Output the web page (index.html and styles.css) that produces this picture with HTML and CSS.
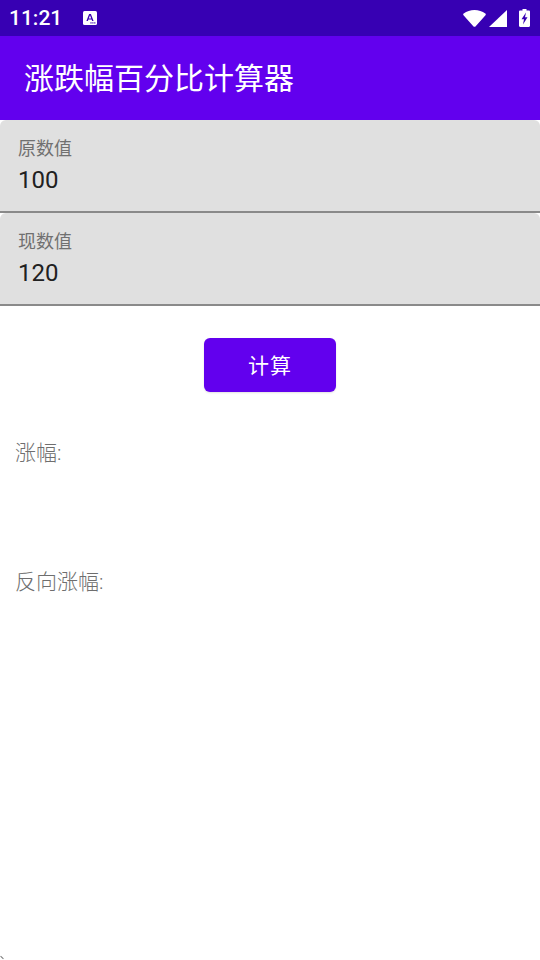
FILE: index.html
```html
<!DOCTYPE html>
<html lang="zh-CN">
<head>
    <meta charset="UTF-8">
    <meta name="viewport" content="width=device-width, initial-scale=1.0">
    <title>涨跌幅百分比计算器</title>
    <link rel="stylesheet" href="styles.css">
</head>
<body>
    <!-- Status bar -->
    <div class="status-bar">
        <span class="time">11:21</span>
        <svg class="icon-a" width="14" height="14" viewBox="0 0 14 14">
            <rect width="14" height="14" rx="1.500" fill="#fff"/>
            <path d="M3.400 10 6.100 3h1.800l2.700 7H9.100l-.5-1.400H5.400L4.900 10zM5.800 7.400h2.400L7 4.200z" fill="#3700B3"/>
            <rect x="7.400" y="11.300" width="1.200" height="1.200" fill="#3700B3"/>
            <rect x="9.300" y="11.300" width="1.200" height="1.200" fill="#3700B3"/>
            <rect x="11.200" y="11.300" width="1.200" height="1.200" fill="#3700B3"/>
        </svg>
        <div class="status-icons">
            <svg class="icon-wifi" width="23" height="17" viewBox="0 0 23 17"><path d="M10.300 16.200.5 5.300c-.5-.6-.4-1.400.2-1.800C3.700 1.300 7.400 0 11.500 0s7.800 1.300 10.800 3.500c.6.400.7 1.200.2 1.800l-9.800 10.900c-.7.700-1.700.7-2.400 0z" fill="#fff"/></svg>
            <svg class="icon-signal" width="18" height="17" viewBox="0 0 18 17"><path d="M0 17 18 0v17z" fill="#fff"/></svg>
            <svg class="icon-battery" width="11" height="18" viewBox="0 0 11 18">
                <path d="M3.500 0h4v1.500h2.300c.7 0 1.200.5 1.200 1.200v14.100c0 .7-.5 1.200-1.200 1.200H1.200C.5 18 0 17.500 0 16.800V2.700c0-.7.500-1.200 1.200-1.200h2.300z" fill="#fff"/>
                <path d="M7 3.500 2.500 10.300h2.500L4 15.500l4.500-7.300H6z" fill="#3700B3"/>
            </svg>
        </div>
    </div>

    <!-- App bar -->
    <header class="app-bar">涨跌幅百分比计算器</header>

    <!-- Inputs -->
    <div class="field">
        <label class="field-label">原数值</label>
        <div class="field-value">100</div>
    </div>
    <div class="field">
        <label class="field-label">现数值</label>
        <div class="field-value">120</div>
    </div>

    <div class="actions">
        <button class="calc-btn">计算</button>
    </div>

    <!-- Results -->
    <div class="results">
        <p class="result">涨幅:</p>
        <p class="result">反向涨幅:</p>
    </div>

    <div class="corner-mark"></div>
</body>
</html>
```

FILE: styles.css
```css
body {
    position: relative;
    margin: 0;
    height: 960px;
    overflow: hidden;
    background-color: #fff;
    font-family: Roboto, "Noto Sans CJK SC", sans-serif;
}
.status-bar {
    display: flex;
    align-items: center;
    height: 36px;
    padding: 0 10px 0 9px;
    background-color: #3700B3;
    color: #fff;
}
.time {
    font-size: 21px;
    font-weight: 500;
}
.icon-a {
    margin-left: 21px;
}
.status-icons {
    display: flex;
    align-items: center;
    margin-left: auto;
}
.icon-signal {
    margin-left: 3px;
}
.icon-battery {
    margin-left: 12px;
}
.app-bar {
    box-sizing: border-box;
    display: flex;
    align-items: center;
    height: 84px;
    padding: 0 0 4px 24px;
    background-color: #6200EE;
    color: #fff;
    font-size: 30px;
}
.field {
    box-sizing: border-box;
    height: 93px;
    padding: 17px 18px 0;
    background-color: #E0E0E0;
    border-bottom: 2px solid #8a8a8a;
    border-radius: 6px 6px 0 0;
}
.field-label {
    display: block;
    font-size: 18px;
    line-height: 24px;
    color: #707070;
}
.field-value {
    margin-top: 3px;
    font-size: 24px;
    line-height: 32px;
    color: #212121;
}
.actions {
    display: flex;
    justify-content: center;
    padding-top: 32px;
}
.calc-btn {
    width: 132px;
    height: 54px;
    padding: 0 0 2px;
    border: none;
    border-radius: 6px;
    background-color: #6200EE;
    color: #fff;
    font-family: inherit;
    font-size: 21px;
    letter-spacing: 1px;
    box-shadow: 0 1px 2px rgba(0,0,0,0.12);
}
.results {
    padding: 47px 15px 0;
}
.result {
    margin: 0 0 100px;
    font-size: 21px;
    line-height: 29px;
    font-weight: 300;
    color: #6e6e6e;
}
.corner-mark {
    position: absolute;
    left: 0;
    bottom: 2px;
    width: 4px;
    height: 1px;
    background-color: #777;
    transform: rotate(45deg);
}
```
